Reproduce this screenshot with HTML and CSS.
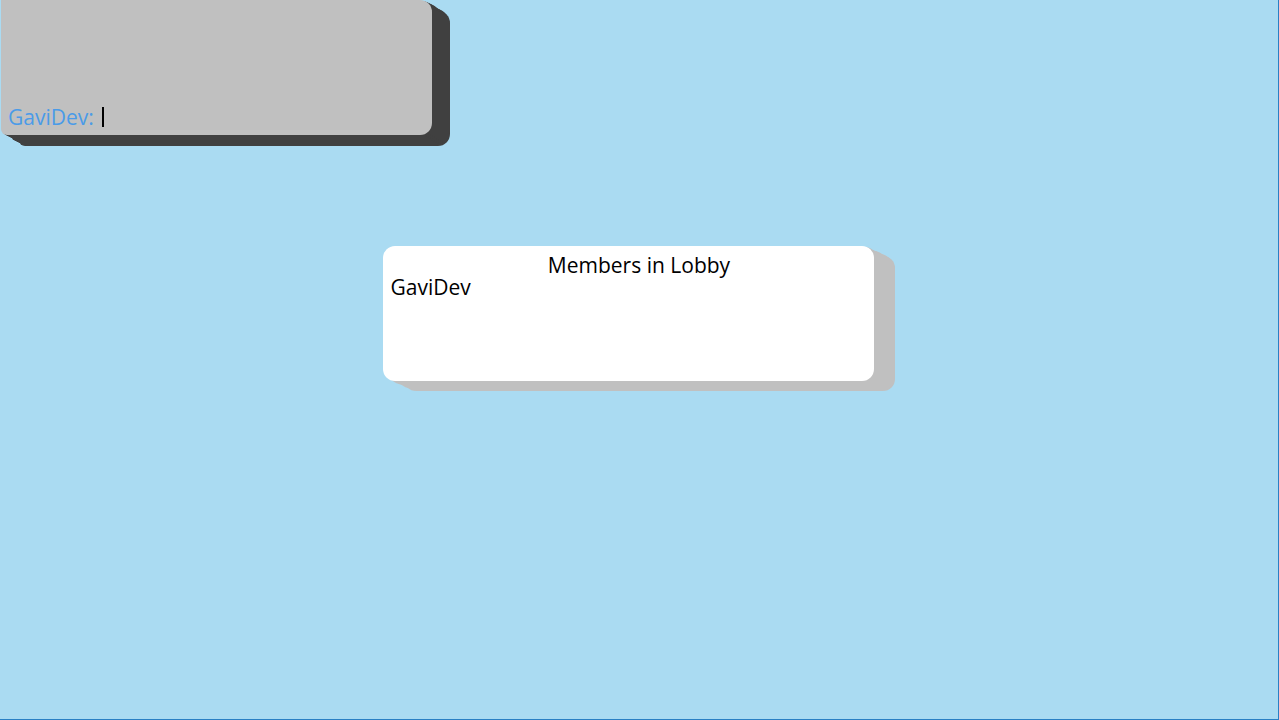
FILE: index.html
```html
<!DOCTYPE html>
<html>
<head>
<meta charset="utf-8">
<link rel="stylesheet" href="styles.css">
</head>
<body>
<div class="page">
  <div class="chat">
    <div class="chat-line"><span class="chat-name">GaviDev:</span><span class="caret"></span></div>
  </div>
  <div class="lobby-wrap">
    <div class="lobby">
      <div class="lobby-title">Members in Lobby</div>
      <div class="lobby-member">GaviDev</div>
    </div>
  </div>
</div>
</body>
</html>
```
FILE: styles.css
```css
html, body {
  margin: 0;
  padding: 0;
}
body {
  background: #aadbf2;
  font-family: "Open Sans", "Noto Sans", sans-serif;
  width: 1279px;
  height: 720px;
  overflow: hidden;
}
.page {
  box-sizing: border-box;
  width: 1279px;
  height: 720px;
  border-right: 1px solid #2a80c4;
  border-bottom: 1px solid #2a80c4;
  display: flex;
  flex-direction: column;
}
.chat {
  box-sizing: border-box;
  width: 431px;
  height: 135px;
  margin-left: 1px;
  background: #c0c0c0;
  border-radius: 0 12px 12px 6px;
  display: flex;
  align-items: flex-end;
  padding: 0 0 7px 7px;
  box-shadow:
    2px 1px 0 #404040,
    4px 2px 0 #404040,
    6px 3px 0 #404040,
    8px 4px 0 #404040,
    10px 6px 0 #404040,
    12px 7px 0 #404040,
    14px 8px 0 #404040,
    16px 9px 0 #404040,
    18px 11px 0 #404040;
}
.chat-line {
  font-size: 21px;
  line-height: 22px;
  color: #4a9be8;
  display: flex;
  align-items: center;
  white-space: pre;
}
.caret {
  display: inline-block;
  width: 2px;
  height: 20px;
  background: #000;
  margin-left: 8px;
}
.lobby-wrap {
  margin-top: 111px;
  display: flex;
  justify-content: center;
  padding-right: 22px;
}
.lobby {
  box-sizing: border-box;
  width: 491px;
  height: 135px;
  background: #ffffff;
  border-radius: 12px;
  padding: 8px 8px 0 8px;
  box-shadow:
    3px 1px 0 #c0c0c0,
    6px 3px 0 #c0c0c0,
    9px 4px 0 #c0c0c0,
    12px 5px 0 #c0c0c0,
    15px 7px 0 #c0c0c0,
    18px 8px 0 #c0c0c0,
    21px 10px 0 #c0c0c0;
  color: #000;
}
.lobby-title {
  font-size: 21px;
  line-height: 22px;
  text-align: center;
  margin-left: 22px;
}
.lobby-member {
  font-size: 21px;
  line-height: 22px;
}
```
